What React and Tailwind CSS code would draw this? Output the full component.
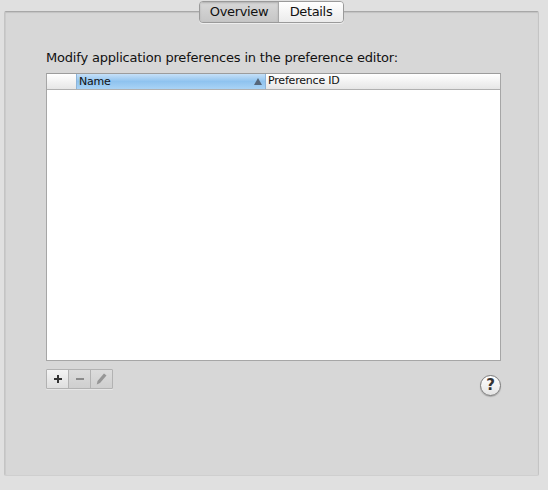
import React from 'react';

const App = () => {
  return (
    <div className="w-[548px] h-[490px] bg-[#e0e0e0] pt-[11px] pl-[4px] overflow-hidden font-['DejaVu_Sans',sans-serif] text-[#111]">
      <div className="w-[535px] h-[465px] bg-[#d7d7d7] border border-[#c4c4c4] border-t-[#a8a8a8] border-b-[#cfcfcf] rounded-[2px] shadow-[inset_0_1px_1px_#c2c2c2,inset_1px_0_0_#cdcdcd] px-[41px]">
        {/* tabs */}
        <div className="flex justify-center -mt-[11px] ml-[-1px] pl-[1px]">
          <div className="flex h-[22px] rounded-[4px] border border-[#9a9a9a] shadow-[0_1px_0_#eeeeee] overflow-hidden text-[13px] leading-[20px] tracking-[-0.35px]">
            <div className="w-[79px] text-center bg-gradient-to-b from-[#d8d8d8] to-[#c6c6c6] border-r border-[#a8a8a8] shadow-[inset_0_1px_2px_#b0b0b0]">Overview</div>
            <div className="w-[64px] text-center bg-gradient-to-b from-[#ffffff] to-[#ebebeb]">Details</div>
          </div>
        </div>

        <p className="mt-[25px] text-[13px] leading-[20px] whitespace-nowrap tracking-[-0.19px]">Modify application preferences in the preference editor:</p>

        {/* table */}
        <div className="mt-[5px] w-[455px] h-[288px] bg-white border border-[#a6a6a6] border-t-[#9c9c9c]">
          <div className="flex h-[16px] border-b border-[#b0b0b0] text-[11px] leading-[14px] tracking-[-0.2px]">
            <div className="w-[29px] bg-gradient-to-b from-[#ffffff] to-[#e6e6e6]"></div>
            <div className="w-[190px] flex items-center justify-between pl-[2px] pr-[3px] bg-gradient-to-b from-[#c6e0f7] via-[#8fc3ef] to-[#a9d3f5] border-x border-[#8db4d8]">
              <span>Name</span>
              <svg width="8" height="7" viewBox="0 0 8 7"><path d="M4 0 L8 7 L0 7 Z" fill="#56667a" /></svg>
            </div>
            <div className="flex-1 pl-[2px] bg-gradient-to-b from-[#ffffff] to-[#e6e6e6]">Preference ID</div>
          </div>
        </div>

        <div className="flex justify-between items-start mt-[8px] w-[455px]">
          {/* add, remove, edit */}
          <div className="flex h-[20px] border border-[#b2b2b2] rounded-[1px] shadow-[0_1px_0_#e6e6e6]">
            <div className="w-[22px] flex items-center justify-center bg-gradient-to-b from-[#f4f4f4] to-[#dedede] border-r border-[#b2b2b2]">
              <svg width="8" height="8" viewBox="0 0 8 8"><path d="M3 0h2v3h3v2H5v3H3V5H0V3h3z" fill="#333333" /></svg>
            </div>
            <div className="w-[22px] flex items-center justify-center bg-gradient-to-b from-[#dcdcdc] to-[#cfcfcf] border-r border-[#b2b2b2]">
              <svg width="8" height="2" viewBox="0 0 8 2"><rect width="8" height="2" fill="#8a8a8a" /></svg>
            </div>
            <div className="w-[21px] flex items-center justify-center bg-gradient-to-b from-[#dcdcdc] to-[#cfcfcf]">
              <svg width="11" height="12" viewBox="0 0 11 12"><path d="M8 0.5 L10.5 2.5 L4 10 L0.8 11.5 L1.5 8 Z" fill="#969696" /></svg>
            </div>
          </div>

          {/* help */}
          <div className="mt-[6px] w-[21px] h-[21px] rounded-full border border-[#7c7c7c] bg-gradient-to-b from-[#ffffff] to-[#e4e4e4] shadow-[0_1px_1px_#a8a8a8] flex items-center justify-center text-[15px] font-bold leading-none text-[#333]">?</div>
        </div>
      </div>
    </div>
  );
};

export default App;
